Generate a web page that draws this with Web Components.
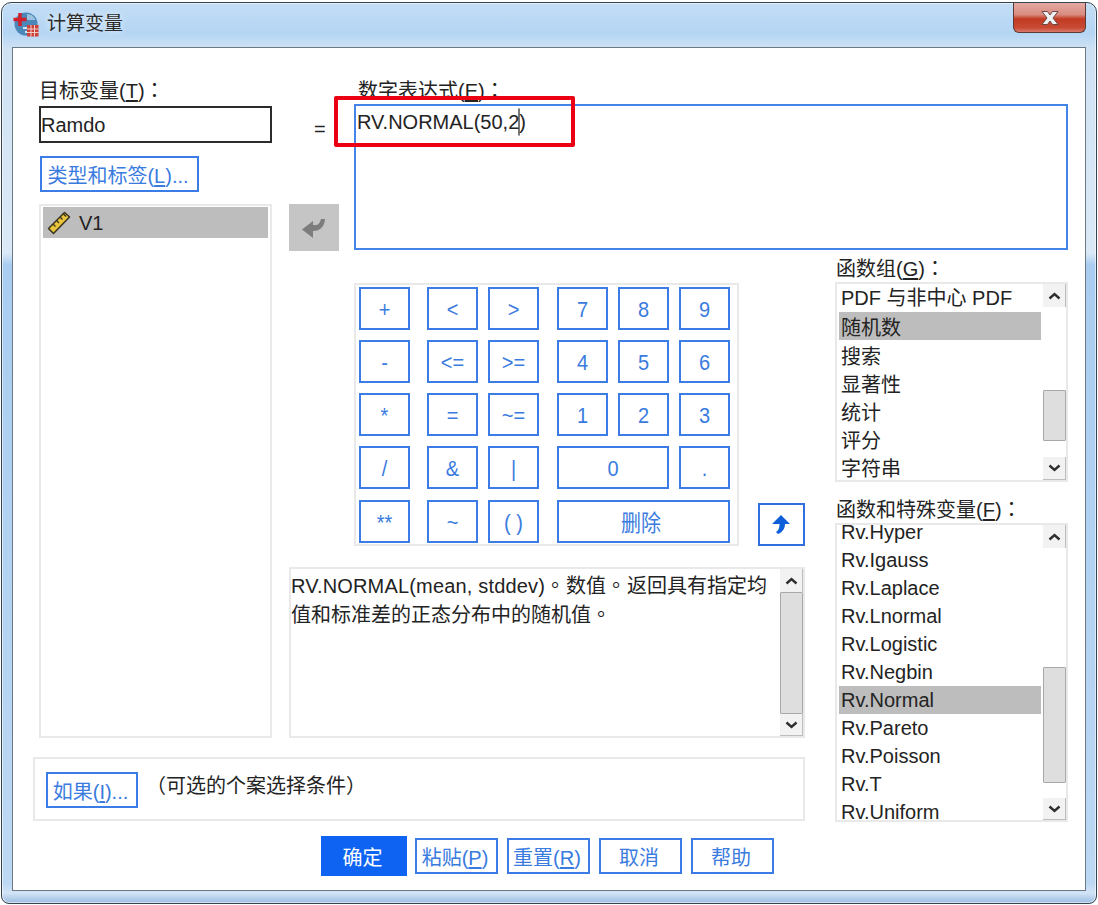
<!DOCTYPE html>
<html lang="zh-CN">
<head>
<meta charset="utf-8">
<title>计算变量</title>
<style>
  html, body { margin: 0; padding: 0; background: #fff; }
  body { font: 20px/28px "Liberation Sans", "Noto Sans CJK SC", sans-serif; color: #232323; }
  /* 句号和冒号居中 */
  .tc { font-family: "Noto Sans CJK TC", sans-serif; }
  .mark { font-family: "Noto Sans CJK TC", sans-serif; margin-right: 1px; }
  .lat { letter-spacing: .17px; }
  u { text-underline-offset: 2px; }
</style>
</head>
<body>
<spss-dialog caption="计算变量">
  <dialog-form>
    <span slot="target-label">目标变量(<u>T</u>)<span class="tc" lang="zh-TW">：</span></span>
    <span slot="target">Ramdo</span>
    <win-button slot="type" style="width:159px;height:36px">类型和标签(<u>L</u>)...</win-button>
    <win-list slot="vars" style="height:534px" pad="1">
      <list-row selected tall><ruler-icon></ruler-icon>V1</list-row>
    </win-list>

    <span slot="expr-label">数字表达式(<u>E</u>)<span class="tc" lang="zh-TW">：</span></span>
    <span slot="expr">RV.NORMAL(50,2<caret-mark></caret-mark>)</span>

    <span slot="group-label">函数组(<u>G</u>)<span class="tc" lang="zh-TW">：</span></span>
    <win-list slot="groups" style="height:200px" up="23" before="83" thumb="51" down="23">
      <list-row>PDF 与非中心 PDF</list-row>
      <list-row selected cjk>随机数</list-row>
      <list-row cjk>搜索</list-row>
      <list-row cjk>显著性</list-row>
      <list-row cjk>统计</list-row>
      <list-row cjk>评分</list-row>
      <list-row cjk>字符串</list-row>
    </win-list>
    <span slot="func-label">函数和特殊变量(<u>F</u>)<span class="tc" lang="zh-TW">：</span></span>
    <win-list slot="funcs" style="height:299px" offset="-7" up="23" before="119" thumb="116" down="22">
      <list-row>Rv.Hyper</list-row>
      <list-row>Rv.Igauss</list-row>
      <list-row>Rv.Laplace</list-row>
      <list-row>Rv.Lnormal</list-row>
      <list-row>Rv.Logistic</list-row>
      <list-row>Rv.Negbin</list-row>
      <list-row selected>Rv.Normal</list-row>
      <list-row>Rv.Pareto</list-row>
      <list-row>Rv.Poisson</list-row>
      <list-row>Rv.T</list-row>
      <list-row>Rv.Uniform</list-row>
    </win-list>

    <span slot="desc"><span class="lat">RV.NORMAL(mean, stddev)</span><span class="mark" lang="zh-TW">。</span>数值<span class="mark" lang="zh-TW">。</span>返回具有指定均<br>值和标准差的正态分布中的随机值<span class="mark" lang="zh-TW">。</span></span>

    <win-button slot="if" style="width:92px;height:36px">如果(<u>I</u>)...</win-button>
    <span slot="if-text">（可选的个案选择条件）</span>

    <win-button slot="actions" primary style="width:86px;height:40px;margin-right:-1px">确定</win-button>
    <win-button slot="actions" style="width:83px;height:36px">粘贴(<u>P</u>)</win-button>
    <win-button slot="actions" style="width:83px;height:36px">重置(<u>R</u>)</win-button>
    <win-button slot="actions" style="width:83px;height:36px">取消</win-button>
    <win-button slot="actions" style="width:83px;height:36px">帮助</win-button>
  </dialog-form>
</spss-dialog>

<script>
// 窗口外框 + 标题栏
class SpssDialog extends HTMLElement {
  constructor() {
    super();
    const caption = this.getAttribute('caption') || '';
    this.attachShadow({ mode: 'open' }).innerHTML = `
      <style>
        :host { display: block; width: 1098px; height: 905px; padding-top: 2px; box-sizing: border-box; }
        .frame {
          width: 1096px; height: 902px; margin-left: 1px; box-sizing: border-box;
          border: 1px solid #37434d; border-radius: 10px 10px 8px 8px;
          padding: 0 10px 12px 10px; display: flex; flex-direction: column;
          background: linear-gradient(180deg, #c3ddf5 0, #b4d5f4 30px, #cfe2f4 46px, #dbe9f6 250px, #a9cdf0 262px, #bcd8f3 880px, #d3e4f6 890px, #8fb4dc 902px);
          box-shadow: inset 0 0 0 1px rgba(255,255,255,.55);
        }
        .bar { height: 44px; flex: none; display: flex; align-items: center; padding-left: 1px; gap: 8px; color: #2a2a2a; font-size: 19px; text-shadow: 0 0 6px rgba(255,255,255,.9); }
        .bar span { position: relative; top: -1px; }
        .close {
          margin-left: auto; align-self: flex-start; width: 73px; height: 30px; box-sizing: border-box;
          border: 1px solid #5c3a38; border-top: 0; border-radius: 0 0 6px 6px;
          background: linear-gradient(180deg, #e4aaa3 0, #d98b80 40%, #c23a22 55%, #c84a33 85%, #d9796c 100%);
          display: flex; align-items: center; justify-content: center;
        }
        .client { flex: 1; min-height: 0; background: #fff; border: 1px solid #6c7985; }
      </style>
      <div class="frame">
        <div class="bar">
          <svg width="26" height="26" viewBox="0 0 26 26">
            <circle cx="13" cy="12" r="11.500" fill="#4b87b8"/>
            <path d="M10 16h13M12 20h9" stroke="#d3e4f0" stroke-width="2"/>
            <path d="M14 2c4 0 7 2 8.500 6H14z" fill="#9cc3de"/>
            <path d="M7 1v13M.500 7.500h13" stroke="#d21f2a" stroke-width="3.500"/>
            <rect x="14" y="13" width="11.500" height="11.500" fill="#cb423a"/>
            <path d="M14 17h11.500M14 20.500h11.500M18 13v11.500M21.500 13v11.500" stroke="#f3cdc8" stroke-width="1"/>
          </svg>
          <span>${caption}</span>
          <div class="close">
            <svg width="28" height="18" viewBox="0 0 28 18">
              <path d="M6 2.500h5.500L14 6l2.500-3.500H22L17 9l5 6.500h-5.500L14 12l-2.500 3.500H6L11 9z" fill="#eef1f3" stroke="#6d4743" stroke-width="1"/>
            </svg>
          </div>
        </div>
        <div class="client"><slot></slot></div>
      </div>`;
  }
}

// 蓝色描边按钮，tall 的文字略拉高
class WinButton extends HTMLElement {
  constructor() {
    super();
    this.attachShadow({ mode: 'open' }).innerHTML = `
      <style>
        :host {
          display: inline-flex; align-items: center; justify-content: center; flex: none;
          box-sizing: border-box; border: 2px solid #3c7ce6; background: #fff; padding: 4px 3px 0 0;
          color: #3a7be0; white-space: nowrap; font-size: 20px; line-height: 1;
        }
        :host([primary]) { background: #0f63f2; border-color: #0f63f2; color: #fff; }
        .t { display: inline-block; }
        :host([tall]) .t { transform: scaleY(1.12); }
      </style>
      <span class="t"><slot></slot></span>`;
  }
}

// 右侧滚动条
class WinScroll extends HTMLElement {
  constructor() {
    super();
    const num = (name, def) => Number(this.getAttribute(name) || def);
    const chevron = (d) => `<svg width="13" height="8" viewBox="0 0 13 8"><path d="${d}" fill="none" stroke="#2e2e2e" stroke-width="2.400"/></svg>`;
    this.attachShadow({ mode: 'open' }).innerHTML = `
      <style>
        :host { display: flex; flex-direction: column; flex: none; width: 23px; }
        .btn { flex: none; display: flex; align-items: center; justify-content: center; background: #f2f2f2; box-sizing: border-box; border-right: 1px solid #bdbdbd; }
        .btn.down { border-bottom: 1px solid #bdbdbd; }
        .track { flex: 1; min-height: 0; }
        .thumb { box-sizing: border-box; background: #dedede; border: 1px solid #a8a8a8; border-radius: 1px; }
      </style>
      <div class="btn up" style="height:${num('up', 23)}px">${chevron('M1.500 6.500L6.500 2l5 4.500')}</div>
      <div class="track">
        <div style="height:${num('before', 0)}px"></div>
        <div class="thumb" style="height:${num('thumb', 50)}px"></div>
      </div>
      <div class="btn down" style="height:${num('down', 23)}px">${chevron('M1.500 1.500L6.500 6l5-4.500')}</div>`;
  }
}

// 列表框，带 up 属性时才有滚动条
class WinList extends HTMLElement {
  constructor() {
    super();
    const offset = this.getAttribute('offset') || 0;
    const pad = this.getAttribute('pad') || 0;
    const bar = this.hasAttribute('up')
      ? `<win-scroll up="${this.getAttribute('up')}" before="${this.getAttribute('before')}" thumb="${this.getAttribute('thumb')}" down="${this.getAttribute('down')}"></win-scroll>`
      : '';
    this.attachShadow({ mode: 'open' }).innerHTML = `
      <style>
        :host { display: flex; box-sizing: border-box; border: 2px solid #e9e9e9; background: #fff; padding-left: 2px; }
        :host(:not([up])) { padding-right: 2px; }
        .rows { flex: 1; min-width: 0; overflow: hidden; padding-top: ${pad}px; }
        .inner { margin-top: ${offset}px; margin-right: 2px; }
        :host(:not([up])) .inner { margin-right: 0; }
      </style>
      <div class="rows"><div class="inner"><slot></slot></div></div>${bar}`;
  }
}

class ListRow extends HTMLElement {
  constructor() {
    super();
    this.attachShadow({ mode: 'open' }).innerHTML = `
      <style>
        :host { display: flex; align-items: center; box-sizing: border-box; height: 28px; padding-left: 2px; white-space: nowrap; }
        :host([selected]) { background: #bdbdbd; }
        :host([cjk]) { padding-top: 5px; }
        :host([cjk][selected]) { padding-top: 3px; }
        :host([tall]) { height: 31px; padding-left: 4px; gap: 8px; }
      </style>
      <slot></slot>`;
  }
}

class RulerIcon extends HTMLElement {
  constructor() {
    super();
    this.attachShadow({ mode: 'open' }).innerHTML = `
      <style>:host { display: inline-flex; flex: none; }</style>
      <svg width="24" height="24" viewBox="0 0 24 24">
        <path d="M1.500 17.500L17.500 1.500l5 4.500L6.500 22.500z" fill="#e8c53a" stroke="#3a3320" stroke-width="1.500" stroke-linejoin="round"/>
        <path d="M6 13l2.500 2.500M9.500 9.500L12 12M13 6l2.500 2.500M16.500 3l2.500 2.500" stroke="#3a3320" stroke-width="1.300"/>
      </svg>`;
  }
}

class CaretMark extends HTMLElement {
  constructor() {
    super();
    this.attachShadow({ mode: 'open' }).innerHTML = `
      <style>:host { display: inline-block; width: 0; height: 26px; margin-top: -4px; vertical-align: middle; box-shadow: 0 0 0 .6px #222; }</style>`;
  }
}

// 数字键盘，分三组
class CalcPad extends HTMLElement {
  constructor() {
    super();
    const cell = ([text, span]) => `<win-button tall ${span ? `style="grid-column:span ${span}"` : ''}>${text}</win-button>`;
    const group = (cls, keys) => `<div class="group ${cls}">${keys.map(cell).join('')}</div>`;
    this.attachShadow({ mode: 'open' }).innerHTML = `
      <style>
        :host { display: flex; flex: none; gap: 17px; box-sizing: border-box; width: 385px; height: 263px; border: 2px solid #e9e9e9; padding: 2px 0 0 3px; }
        .group { display: grid; grid-template-rows: 43px 43px 43px 44px 43px; row-gap: 10px; column-gap: 10px; }
        .g1 { grid-template-columns: 51px; }
        .g2 { grid-template-columns: 51px 51px; }
        .g3 { grid-template-columns: 51px 51px 51px; margin-left: 1px; }
        win-button { height: 43px; padding: 0; }
        .g3 win-button:last-child { padding: 3px 5px 0 0; }
      </style>
      ${group('g1', [['+'], ['-'], ['*'], ['/'], ['**']])}
      ${group('g2', [['&lt;'], ['&gt;'], ['&lt;='], ['&gt;='], ['='], ['~='], ['&amp;'], ['|'], ['~'], ['( )']])}
      ${group('g3', [['7'], ['8'], ['9'], ['4'], ['5'], ['6'], ['1'], ['2'], ['3'], ['0', 2], ['.'], ['删除', 3]])}`;
  }
}

// 对话框主体
class DialogForm extends HTMLElement {
  constructor() {
    super();
    this.attachShadow({ mode: 'open' }).innerHTML = `
      <style>
        :host { display: block; }
        .grid {
          display: grid; grid-template-columns: 233px 17px 516px 30px 233px;
          grid-template-rows: 172px 488px 84px;
          padding: 30px 0 0 26px;
        }
        .left { grid-column: 1; grid-row: 1 / 3; display: flex; flex-direction: column; }
        .label { height: 24px; line-height: 24px; white-space: nowrap; }
        .input { margin-top: 4px; height: 37px; box-sizing: border-box; border: 2px solid #2b2b2b; line-height: 35px; }
        .left ::slotted([slot=type]) { margin: 13px 0 0 1px; }
        .left ::slotted([slot=vars]) { margin-top: 12px; }

        .top { grid-column: 3 / 6; grid-row: 1; display: flex; gap: 15px; }
        .eqcol { width: 50px; flex: none; display: flex; flex-direction: column; }
        .eq { padding: 38px 0 0 25px; line-height: 26px; }
        .back { margin-top: auto; margin-bottom: -1px; height: 47px; padding-top: 3px; box-sizing: border-box; background: #c5c5c5; display: flex; align-items: center; justify-content: center; }
        .exprcol { width: 714px; position: relative; display: flex; flex-direction: column; }
        .exprcol .label { height: 26px; padding-left: 4px; }
        .expr { flex: 1; box-sizing: border-box; border: 2px solid #4483e8; padding: 3px 0 0 1px; line-height: 26px; }
        .redmark { position: absolute; left: -20px; top: 18px; width: 241px; height: 51px; box-sizing: border-box; border: 4px solid #ea0012; border-radius: 2px; }

        .mid { grid-column: 3; grid-row: 2; display: flex; flex-direction: column; padding-top: 33px; }
        .padrow { display: flex; align-items: flex-end; gap: 19px; padding-left: 65px; }
        .up { width: 47px; height: 43px; box-sizing: border-box; border: 2px solid #2f6fe0; display: flex; align-items: center; justify-content: center; }
        .desc { margin-top: 21px; flex: 1; min-height: 0; display: flex; box-sizing: border-box; border: 2px solid #e9e9e9; }
        .desctext { flex: 1; min-width: 0; padding: 2px 0 0 0; line-height: 28px; white-space: nowrap; }

        .right { grid-column: 5; grid-row: 2 / 4; display: flex; flex-direction: column; padding-top: 6px; }
        .right .label { height: 26px; padding-left: 1px; }
        .right .gap15 { margin-top: 15px; }

        .ifbox { grid-column: 1 / 4; grid-row: 3; margin: 19px 0 0 -6px; height: 64px; box-sizing: border-box; border: 2px solid #e9e9e9; display: flex; gap: 8px; padding: 13px 0 0 11px; }
        .iftext { line-height: 28px; margin-top: 0; white-space: nowrap; }

        .actions { display: flex; gap: 9px; align-items: center; height: 40px; margin-top: 14px; padding-left: 308px; }
      </style>
      <div class="grid">
        <div class="left">
          <div class="label"><slot name="target-label"></slot></div>
          <div class="input"><slot name="target"></slot></div>
          <slot name="type"></slot>
          <slot name="vars"></slot>
        </div>

        <div class="top">
          <div class="eqcol">
            <div class="eq">=</div>
            <div class="back">
              <svg width="24" height="20" viewBox="0 0 24 20"><path d="M0 10.500L11 2v4h3c2 0 4-2 5-6h4c-.5 6-3 10-8 11.500l-4 .5v7z" fill="#7d7d7d"/></svg>
            </div>
          </div>
          <div class="exprcol">
            <div class="label"><slot name="expr-label"></slot></div>
            <div class="expr"><slot name="expr"></slot></div>
            <div class="redmark"></div>
          </div>
        </div>

        <div class="mid">
          <div class="padrow">
            <calc-pad></calc-pad>
            <div class="up">
              <svg width="20" height="20" viewBox="0 0 20 20"><path d="M9 0L18 9h-5c0 4-2 8-7 10l-2-2c2.500-1.500 3.500-4 3.500-8H0z" fill="#0f5fd8"/></svg>
            </div>
          </div>
          <div class="desc">
            <div class="desctext"><slot name="desc"></slot></div>
            <win-scroll up="23" before="0" thumb="122" down="22"></win-scroll>
          </div>
        </div>

        <div class="right">
          <div class="label"><slot name="group-label"></slot></div>
          <slot name="groups"></slot>
          <div class="label gap15"><slot name="func-label"></slot></div>
          <slot name="funcs"></slot>
        </div>

        <div class="ifbox">
          <slot name="if"></slot>
          <div class="iftext"><slot name="if-text"></slot></div>
        </div>
      </div>
      <div class="actions"><slot name="actions"></slot></div>`;
  }
}

customElements.define('win-button', WinButton);
customElements.define('win-scroll', WinScroll);
customElements.define('list-row', ListRow);
customElements.define('win-list', WinList);
customElements.define('ruler-icon', RulerIcon);
customElements.define('caret-mark', CaretMark);
customElements.define('calc-pad', CalcPad);
customElements.define('dialog-form', DialogForm);
customElements.define('spss-dialog', SpssDialog);
</script>
</body>
</html>
